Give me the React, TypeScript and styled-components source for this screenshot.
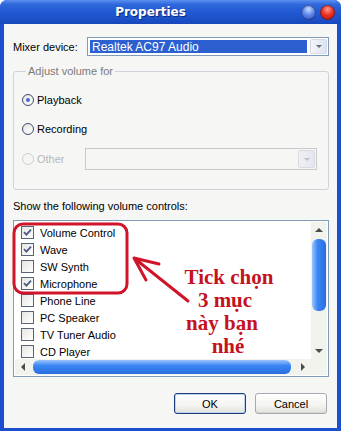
import styled, { createGlobalStyle, css } from "styled-components";

const GlobalStyle = createGlobalStyle`
  html, body {
    margin: 0;
    padding: 0;
    background: #ffffff;
  }
  body {
    font-family: "Liberation Sans", Arial, sans-serif;
    font-size: 11px;
    color: #000;
  }
`;

const Window = styled.div`
  position: relative;
  width: 341px;
  height: 431px;
  display: flex;
  flex-direction: column;
  overflow: hidden;
  border-radius: 7px 7px 0 0;
  background: #1c4fd0;
`;

const TitleBar = styled.div`
  height: 24px;
  flex: none;
  display: flex;
  align-items: center;
  padding: 0 6px 0 0;
  background: linear-gradient(
    to bottom,
    #5a90f0 0%,
    #2f68dc 18%,
    #2258d2 50%,
    #1c50c8 80%,
    #1648bc 100%
  );
`;

const TitleText = styled.div`
  flex: 1;
  text-align: center;
  color: #fff;
  font-family: "DejaVu Sans", "Liberation Sans", sans-serif;
  font-weight: bold;
  font-size: 12px;
  text-shadow: 1px 1px 0 #0c2a80;
`;

const TitleButtons = styled.div`
  display: flex;
  gap: 4px;
  align-items: center;
`;

const Orb = styled.div<{ $red?: boolean }>`
  width: 15px;
  height: 15px;
  border-radius: 50%;
  box-shadow: inset 0 0 0 1px rgba(20, 30, 80, 0.5);
  background: ${(p) =>
    p.$red
      ? "radial-gradient(circle at 50% 30%, #ff9a8a 0%, #e8301e 45%, #b0100a 100%)"
      : "radial-gradient(circle at 50% 30%, #c8dcff 0%, #5a84e8 45%, #2a48b8 100%)"};
`;

const Body = styled.div`
  flex: 1;
  margin: 0 4px 3px 4px;
  background: #f6f6f4;
  padding: 13px 8px 0 9px;
  display: flex;
  flex-direction: column;
  & > * {
    flex: none;
  }
`;

const MixerRow = styled.div`
  display: flex;
  align-items: center;
  height: 19px;
`;

const Label = styled.span<{ $disabled?: boolean }>`
  white-space: nowrap;
  color: ${(p) => (p.$disabled ? "#b8b8b8" : "#000")};
`;

const Combo = styled.div<{ $disabled?: boolean }>`
  margin-left: auto;
  display: flex;
  align-items: stretch;
  border: 1px solid ${(p) => (p.$disabled ? "#c9c9c9" : "#7f9db9")};
  background: ${(p) => (p.$disabled ? "#f6f6f4" : "#fff")};
  box-sizing: border-box;
`;

const ComboValue = styled.div`
  flex: 1;
  margin: 2px;
  padding-left: 2px;
  background: #2c5fcf;
  color: #fff;
  font-size: 12px;
  display: flex;
  align-items: center;
`;

const ComboArrow = styled.div<{ $disabled?: boolean }>`
  width: 15px;
  margin: 1px;
  border-radius: 2px;
  background: ${(p) =>
    p.$disabled
      ? "linear-gradient(to right, #f0f0f4, #e4e4ec)"
      : "linear-gradient(to right, #f4f6fa, #dde3ee)"};
  border: 1px solid #d6dbe6;
  display: flex;
  align-items: center;
  justify-content: center;
  &::after {
    content: "";
    border-left: 3px solid transparent;
    border-right: 3px solid transparent;
    border-top: 3px solid ${(p) => (p.$disabled ? "#c0c0c8" : "#6a7080")};
  }
`;

const GroupBox = styled.fieldset`
  margin: 9px 0 0 0;
  padding: 16px 0 13px 8px;
  border: 1px solid #cfd2d8;
  border-radius: 3px;
  display: flex;
  flex-direction: column;
  gap: 16px;
  height: 125px;
  box-sizing: border-box;
`;

const Legend = styled.legend`
  padding: 0 2px;
  margin-left: 4px;
  color: #7b7b7b;
`;

const RadioRow = styled.label`
  display: flex;
  align-items: center;
  gap: 3px;
  height: 13px;
`;

const Radio = styled.span<{ $checked?: boolean; $disabled?: boolean }>`
  width: 12px;
  height: 12px;
  border-radius: 50%;
  box-sizing: border-box;
  border: 1px solid ${(p) => (p.$disabled ? "#cfcfcf" : "#3d4a6a")};
  background: ${(p) =>
    p.$disabled ? "#f6f6f4" : "linear-gradient(135deg, #e4e4e0, #ffffff)"};
  display: flex;
  align-items: center;
  justify-content: center;
  ${(p) =>
    p.$checked &&
    css`
      &::after {
        content: "";
        width: 4px;
        height: 4px;
        border-radius: 50%;
        background: #4a6ad0;
      }
    `}
`;

const OtherRow = styled.div`
  display: flex;
  align-items: center;
  margin-top: -3px;
  padding-right: 11px;
`;

const SectionLabel = styled.div`
  margin: 9px 0 6px 0;
  height: 15px;
  line-height: 15px;
`;

const ListBox = styled.div`
  height: 157px;
  border: 1px solid #7f9db9;
  background: #fff;
  display: grid;
  grid-template-columns: 1fr 16px;
  grid-template-rows: 1fr 16px;
  box-sizing: border-box;
  padding: 1px;
`;

const Items = styled.div`
  padding: 2px 0 0 6px;
  overflow: hidden;
`;

const Item = styled.div`
  display: flex;
  align-items: center;
  gap: 6px;
  height: 17px;
`;

const Check = styled.span`
  width: 13px;
  height: 13px;
  box-sizing: border-box;
  border: 1px solid #5a6478;
  background: linear-gradient(135deg, #e6e6e2, #ffffff);
  display: flex;
  align-items: center;
  justify-content: center;
`;

const ScrollV = styled.div`
  display: flex;
  flex-direction: column;
  background: #f3f3ee;
`;

const ScrollH = styled.div`
  display: flex;
  background: #f3f3ee;
`;

const ScrollBtn = styled.div<{ $dir: "up" | "down" | "left" | "right" }>`
  flex: none;
  width: 16px;
  height: 16px;
  display: flex;
  align-items: center;
  justify-content: center;
  &::after {
    content: "";
    ${(p) =>
      p.$dir === "up"
        ? "border-left:4px solid transparent;border-right:4px solid transparent;border-bottom:4px solid #4a4a50;"
        : p.$dir === "down"
        ? "border-left:4px solid transparent;border-right:4px solid transparent;border-top:4px solid #4a4a50;"
        : p.$dir === "left"
        ? "border-top:4px solid transparent;border-bottom:4px solid transparent;border-right:4px solid #4a4a50;"
        : "border-top:4px solid transparent;border-bottom:4px solid transparent;border-left:4px solid #4a4a50;"}
  }
`;

const Track = styled.div<{ $horizontal?: boolean }>`
  flex: 1;
  display: flex;
  flex-direction: ${(p) => (p.$horizontal ? "row" : "column")};
  padding: ${(p) => (p.$horizontal ? "1px 0" : "0 1px")};
`;

const Thumb = styled.div<{ $horizontal?: boolean }>`
  border-radius: 6px;
  background: ${(p) =>
    p.$horizontal
      ? "linear-gradient(to bottom, #9cc4ff 0%, #3a86f4 40%, #2a6ee0 100%)"
      : "linear-gradient(to right, #9cc4ff 0%, #3a86f4 40%, #2a6ee0 100%)"};
  ${(p) =>
    p.$horizontal
      ? "width: 258px; margin-left: 2px;"
      : "height: 72px; margin-top: 1px;"}
`;

const Corner = styled.div`
  background: #f3f3ee;
`;

const ButtonRow = styled.div`
  margin-top: 16px;
  display: flex;
  justify-content: flex-end;
  gap: 9px;
  padding-right: 2px;
`;

const DialogButton = styled.button<{ $default?: boolean }>`
  width: 72px;
  height: 21px;
  padding: 0;
  font-family: "Liberation Sans", Arial, sans-serif;
  font-size: 11px;
  color: #000;
  border-radius: 3px;
  border: 1px solid ${(p) => (p.$default ? "#1c3b7a" : "#a8a8b0")};
  background: linear-gradient(to bottom, #ffffff 0%, #f4f4f0 60%, #e2e2dc 100%);
  box-shadow: ${(p) =>
    p.$default ? "inset 0 0 0 1px #bcd0f0" : "inset 0 -1px 0 #d8d8d0"};
`;

const Annotation = styled.svg`
  position: absolute;
  left: 0;
  top: 0;
  pointer-events: none;
`;

const Note = styled.div`
  position: absolute;
  left: 176px;
  top: 266px;
  width: 106px;
  text-align: center;
  font-family: "Liberation Serif", "Times New Roman", serif;
  font-weight: bold;
  font-size: 21px;
  line-height: 23px;
  color: #c4121e;
`;

const NoteLine = styled.div<{ $shift?: number }>`
  transform: translateX(${(p) => p.$shift ?? 0}px);
`;

const controls = [
  { name: "Volume Control", checked: true },
  { name: "Wave", checked: true },
  { name: "SW Synth", checked: false },
  { name: "Microphone", checked: true },
  { name: "Phone Line", checked: false },
  { name: "PC Speaker", checked: false },
  { name: "TV Tuner Audio", checked: false },
  { name: "CD Player", checked: false },
];

const Tick = () => (
  <svg width="9" height="9" viewBox="0 0 9 9">
    <path d="M1 4.2 L3.4 6.6 L8 1.6" fill="none" stroke="#4c5a86" strokeWidth="1.8" />
  </svg>
);

export default function App() {
  return (
    <>
      <GlobalStyle />
      <Window>
        <TitleBar>
          <TitleText>Properties</TitleText>
          <TitleButtons>
            <Orb />
            <Orb $red />
          </TitleButtons>
        </TitleBar>
        <Body>
          <MixerRow>
            <Label>Mixer device:</Label>
            <Combo style={{ width: 242, height: 19 }}>
              <ComboValue>Realtek AC97 Audio</ComboValue>
              <ComboArrow />
            </Combo>
          </MixerRow>

          <GroupBox>
            <Legend>Adjust volume for</Legend>
            <RadioRow>
              <Radio $checked />
              <Label>Playback</Label>
            </RadioRow>
            <RadioRow>
              <Radio />
              <Label>Recording</Label>
            </RadioRow>
            <OtherRow>
              <RadioRow>
                <Radio $disabled />
                <Label $disabled>Other</Label>
              </RadioRow>
              <Combo $disabled style={{ width: 232, height: 22 }}>
                <div style={{ flex: 1 }} />
                <ComboArrow $disabled />
              </Combo>
            </OtherRow>
          </GroupBox>

          <SectionLabel>Show the following volume controls:</SectionLabel>
          <ListBox>
            <Items>
              {controls.map((c) => (
                <Item key={c.name}>
                  <Check>{c.checked && <Tick />}</Check>
                  <span>{c.name}</span>
                </Item>
              ))}
            </Items>
            <ScrollV>
              <ScrollBtn $dir="up" />
              <Track>
                <Thumb />
              </Track>
              <ScrollBtn $dir="down" />
            </ScrollV>
            <ScrollH>
              <ScrollBtn $dir="left" />
              <Track $horizontal>
                <Thumb $horizontal />
              </Track>
              <ScrollBtn $dir="right" />
            </ScrollH>
            <Corner />
          </ListBox>

          <ButtonRow>
            <DialogButton $default>OK</DialogButton>
            <DialogButton>Cancel</DialogButton>
          </ButtonRow>
        </Body>

        <Annotation width="341" height="431" viewBox="0 0 341 431">
          <rect
            x="14"
            y="224"
            width="113"
            height="69"
            rx="9"
            fill="none"
            stroke="#d0142a"
            strokeWidth="3"
          />
          <path
            d="M188 301 L134 258 M134 258 L159 264 M134 258 L146 280"
            fill="none"
            stroke="#d0142a"
            strokeWidth="3"
            strokeLinecap="round"
          />
        </Annotation>
        <Note>
          <NoteLine>Tick chọn</NoteLine>
          <NoteLine $shift={-4}>3 mục</NoteLine>
          <NoteLine $shift={-7}>này bạn</NoteLine>
          <NoteLine $shift={-1}>nhé</NoteLine>
        </Note>
      </Window>
    </>
  );
}
